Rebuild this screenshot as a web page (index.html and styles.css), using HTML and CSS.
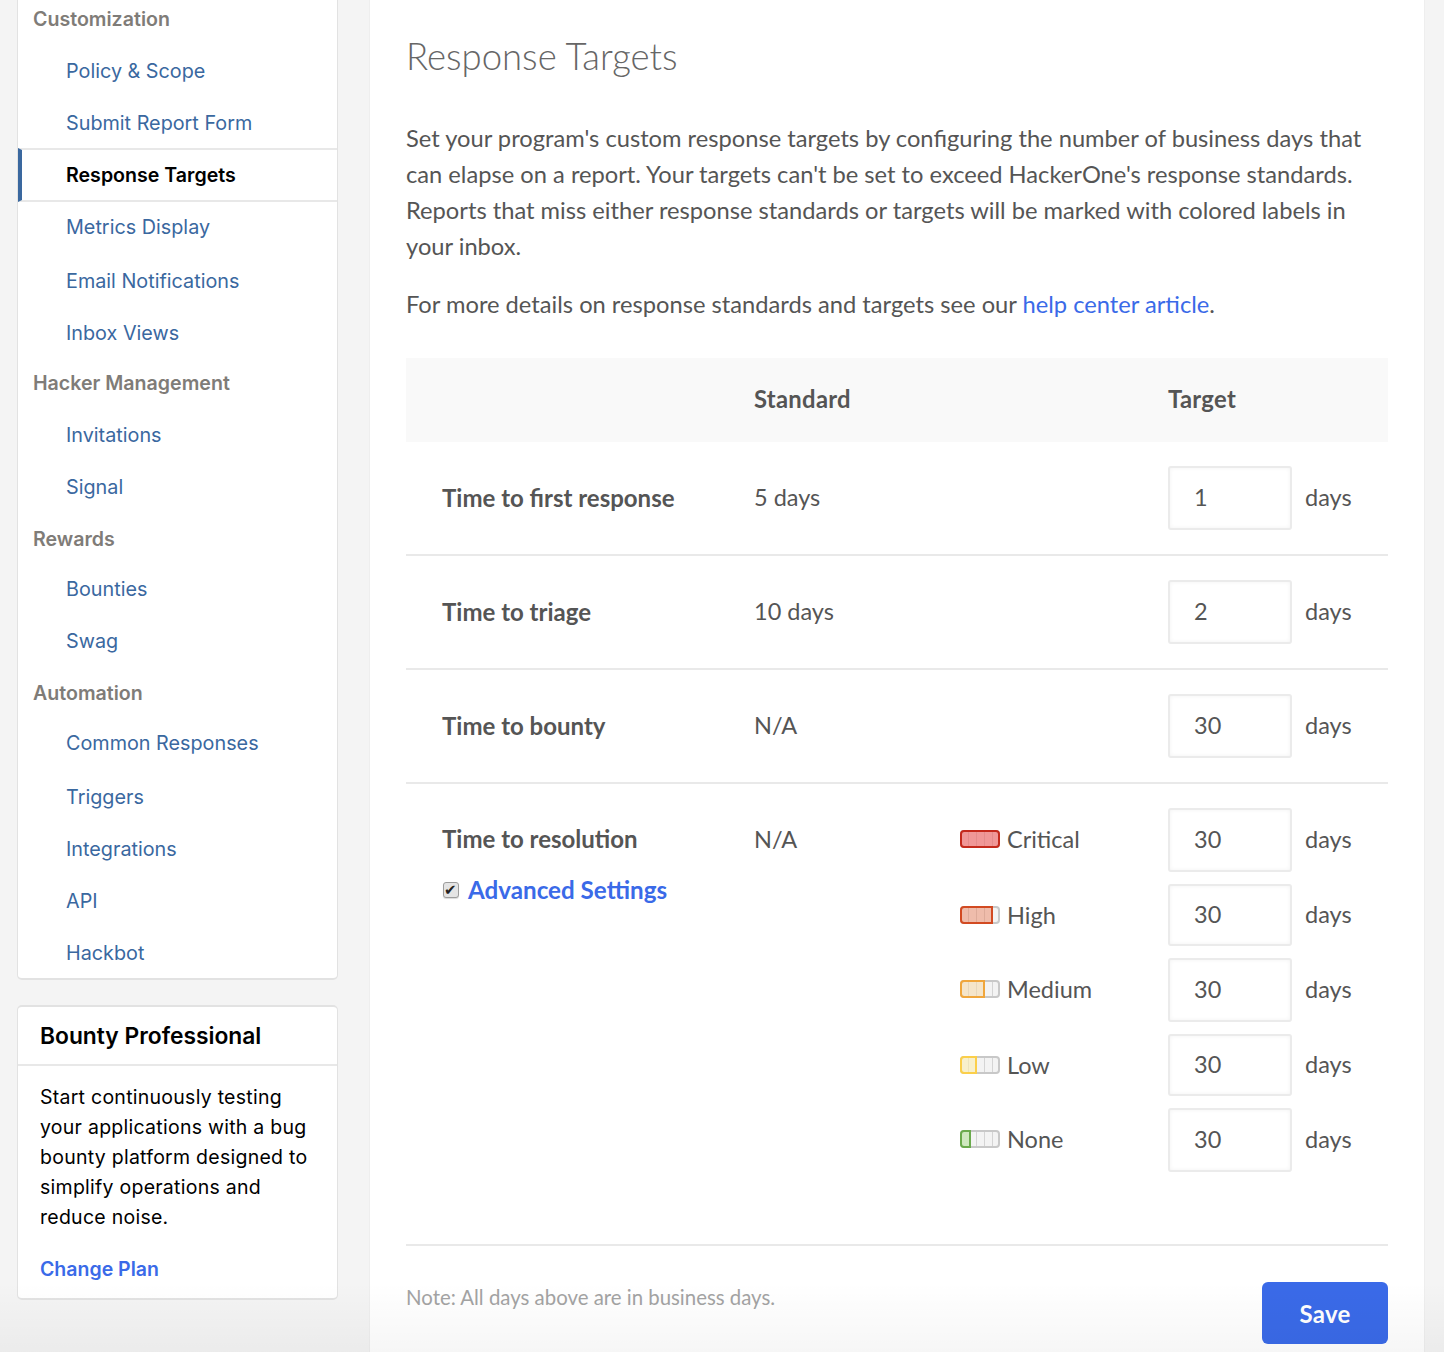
FILE: index.html
```html
<!DOCTYPE html>
<html lang="en">
<head>
  <meta charset="UTF-8" />
  <title>Response Targets</title>
  <link rel="stylesheet" href="styles.css">
</head>
<body>
  <svg class="defs" width="0" height="0">
    <symbol id="track" viewBox="0 0 40 18">
      <rect x="1" y="1" width="38" height="16" rx="3" fill="#f3f3f3" stroke="#c8c8c8" stroke-width="2" />
      <path d="M8.5 2v14M16.5 2v14M24.5 2v14M32.5 2v14" stroke="#d4d4d4" stroke-width="1" />
    </symbol>
  </svg>

  <div class="page">
    <aside class="sidebar">
      <nav class="card nav">
        <div class="nav-head first">Customization</div>
        <a class="nav-link">Policy &amp; Scope</a>
        <a class="nav-link">Submit Report Form</a>
        <a class="nav-link active">Response Targets</a>
        <a class="nav-link">Metrics Display</a>
        <a class="nav-link push">Email Notifications</a>
        <a class="nav-link">Inbox Views</a>
        <div class="nav-head tight">Hacker Management</div>
        <a class="nav-link">Invitations</a>
        <a class="nav-link">Signal</a>
        <div class="nav-head">Rewards</div>
        <a class="nav-link">Bounties</a>
        <a class="nav-link">Swag</a>
        <div class="nav-head">Automation</div>
        <a class="nav-link">Common Responses</a>
        <a class="nav-link push">Triggers</a>
        <a class="nav-link">Integrations</a>
        <a class="nav-link">API</a>
        <a class="nav-link">Hackbot</a>
      </nav>

      <section class="card plan">
        <h3 class="plan-title">Bounty Professional</h3>
        <div class="plan-body">
          <p>Start continuously testing your applications with a bug bounty platform designed to simplify operations and reduce noise.</p>
          <a class="plan-link">Change Plan</a>
        </div>
      </section>
    </aside>

    <main class="main">
      <h1 class="title">Response Targets</h1>
      <p class="intro">Set your program's custom response targets by configuring the number of business days that can elapse on a report. Your targets can't be set to exceed HackerOne's response standards. Reports that miss either response standards or targets will be marked with colored labels in your inbox.</p>
      <p class="intro more">For more details on response standards and targets see our <a class="link">help center article</a>.</p>

      <div class="row table-head">
        <div></div>
        <div>Standard</div>
        <div></div>
        <div>Target</div>
      </div>

      <div class="row">
        <div class="row-label">Time to first response</div>
        <div>5 days</div>
        <div></div>
        <div class="target"><input class="days-input" type="text" value="1"><span>days</span></div>
      </div>
      <div class="row">
        <div class="row-label">Time to triage</div>
        <div>10 days</div>
        <div></div>
        <div class="target"><input class="days-input" type="text" value="2"><span>days</span></div>
      </div>
      <div class="row">
        <div class="row-label">Time to bounty</div>
        <div>N/A</div>
        <div></div>
        <div class="target"><input class="days-input" type="text" value="30"><span>days</span></div>
      </div>

      <div class="row resolution">
        <div>
          <div class="row-label res-label">Time to resolution</div>
          <label class="advanced"><input type="checkbox" checked> Advanced Settings</label>
        </div>
        <div class="res-standard">N/A</div>
        <div class="severities">
          <div class="sev-row">
            <svg class="sev" viewBox="0 0 40 18"><use href="#track" width="40" height="18" /><rect x="1" y="1" width="38" height="16" rx="3" fill="#ef5a5a" fill-opacity=".6" stroke="#c4291c" stroke-width="2" /></svg>
            Critical
          </div>
          <div class="sev-row">
            <svg class="sev" viewBox="0 0 40 18"><use href="#track" width="40" height="18" /><path d="M4 1h28v16H4a3 3 0 0 1-3-3V4a3 3 0 0 1 3-3z" fill="#ea7a55" fill-opacity=".45" stroke="#d24a22" stroke-width="2" /></svg>
            High
          </div>
          <div class="sev-row">
            <svg class="sev" viewBox="0 0 40 18"><use href="#track" width="40" height="18" /><path d="M4 1h20v16H4a3 3 0 0 1-3-3V4a3 3 0 0 1 3-3z" fill="#f5d9a8" fill-opacity=".55" stroke="#f0a63c" stroke-width="2" /></svg>
            Medium
          </div>
          <div class="sev-row">
            <svg class="sev" viewBox="0 0 40 18"><use href="#track" width="40" height="18" /><path d="M4 1h12v16H4a3 3 0 0 1-3-3V4a3 3 0 0 1 3-3z" fill="#fbeeb0" fill-opacity=".6" stroke="#fbcf4a" stroke-width="2" /></svg>
            Low
          </div>
          <div class="sev-row">
            <svg class="sev" viewBox="0 0 40 18"><use href="#track" width="40" height="18" /><path d="M4 1h6v16H4a3 3 0 0 1-3-3V4a3 3 0 0 1 3-3z" fill="#cfe8bf" stroke="#6aaa4c" stroke-width="2" /></svg>
            None
          </div>
        </div>
        <div class="targets">
          <div class="target"><input class="days-input" type="text" value="30"><span>days</span></div>
          <div class="target"><input class="days-input" type="text" value="30"><span>days</span></div>
          <div class="target"><input class="days-input" type="text" value="30"><span>days</span></div>
          <div class="target"><input class="days-input" type="text" value="30"><span>days</span></div>
          <div class="target"><input class="days-input" type="text" value="30"><span>days</span></div>
        </div>
      </div>

      <div class="foot">
        <span class="note">Note: All days above are in business days.</span>
        <button class="save">Save</button>
      </div>
    </main>
  </div>
  <div class="fade"></div>
</body>
</html>
```

FILE: styles.css
```css
html, body { margin: 0; height: 1352px; overflow: hidden; }
body { background: #f4f4f4; font-family: Lato, sans-serif; color: #555; position: relative; }
.defs { position: absolute; }
.page { display: flex; align-items: flex-start; padding-left: 17px; }
.sidebar { width: 321px; flex: none; font-family: Inter, sans-serif; }

.card { background: #fff; border: 1px solid #e2e2e2; border-bottom-width: 2px; border-radius: 5px; box-sizing: border-box; }
.nav { border-top: 0; border-radius: 0 0 5px 5px; height: 980px; }
.nav-head { height: 50px; line-height: 52px; padding-left: 15px; font-size: 19.6px; font-weight: 600; color: #7f7c78; }
.nav-head.first { height: 45px; line-height: 38px; }
.nav-head.tight { line-height: 48px; }
.nav-link { display: block; height: 52px; line-height: 52px; padding-left: 48px; font-size: 19.8px; color: #3a689f; }
.nav-link.push { margin-top: 2px; }
.nav-link.active { height: 54px; margin: -1px 0; line-height: 50px; box-sizing: border-box; padding-left: 44px; color: #000; font-weight: 600; font-size: 19.6px; border-top: 2px solid #e8e8e8; border-bottom: 2px solid #e8e8e8; border-left: 4px solid #3a689f; }

.plan { margin-top: 25px; height: 295px; border-top-width: 2px; }
.plan-title { margin: 0; height: 57px; line-height: 57px; padding-left: 22px; font-size: 22.8px; font-weight: 600; color: #000; border-bottom: 2px solid #e8e8e8; }
.plan-body { padding: 16px 22px 0; color: #000; font-size: 19.5px; line-height: 30px; letter-spacing: .26px; }
.plan-body p { margin: 0; }
.plan-link { display: block; margin-top: 22px; color: #3a6ae8; font-weight: 600; letter-spacing: 0; }

.main { width: 1054px; margin-left: 32px; height: 1352px; box-sizing: border-box; padding: 0 36px; background: #fff; box-shadow: 0 0 0 1px #eee; }
.title { margin: 0; padding-top: 33px; height: 84px; box-sizing: border-box; font-size: 36.5px; line-height: 46px; font-weight: 300; color: #666; }
.intro { margin: 0; padding-top: 36px; max-width: 972px; font-size: 23.7px; line-height: 36px; }
.intro.more { padding-top: 22px; }
.link { color: #3a6ae8; }

.row { display: grid; grid-template-columns: 312px 205px 208px 1fr; padding-left: 36px; height: 114px; align-items: center; border-bottom: 2px solid #e9e9e9; box-sizing: border-box; font-size: 23.5px; }
.row > div:not(.target), .target span { padding-bottom: 2px; }
.table-head { margin-top: 36px; height: 84px; background: #f9f9f9; border-bottom: 0; font-size: 23.8px; font-weight: 700; letter-spacing: .3px; }
.table-head > div:last-child { margin-left: 1px; }
.row-label { font-size: 24px; font-weight: 700; }
.target { display: flex; align-items: center; gap: 13px; margin-left: 1px; }
.days-input { width: 124px; height: 64px; box-sizing: border-box; padding: 0 0 2px 24px; border: 2px solid #ebebeb; border-radius: 3px; font: inherit; color: #555; outline: 0; box-shadow: inset 0 0 4px rgba(0, 0, 0, .05); }

.resolution { height: 462px; align-items: start; padding-top: 24px; }
.res-label { line-height: 62px; }
.res-standard { line-height: 62px; }
.advanced { display: flex; align-items: center; gap: 9px; margin-top: 5px; color: #3a6ae8; font-size: 24.2px; font-weight: 700; }
.advanced input { appearance: none; position: relative; margin: 0 0 0 1px; width: 16px; height: 16px; border: 1px solid #9c9c9c; border-radius: 3px; background: #e4e4e4; box-shadow: 0 1px 1px rgba(0, 0, 0, .15); }
.advanced input::after { content: "\2714"; position: absolute; left: 0; top: -1px; font: 15px/16px "DejaVu Sans", sans-serif; color: #222; }
.severities, .targets { display: flex; flex-direction: column; gap: 12px; }
.severities { margin-top: -1px; margin-left: 1px; padding-bottom: 0; }
.sev-row { display: flex; align-items: center; gap: 7px; height: 64px; }
.sev-row:nth-child(even) { height: 62px; padding-top: 2px; box-sizing: border-box; }
.targets .target:nth-child(even) .days-input { height: 62px; }
.sev { width: 40px; height: 18px; flex: none; }

.foot { display: flex; justify-content: space-between; align-items: flex-start; padding-top: 36px; }
.note { font-size: 20.4px; color: #a3a3a3; line-height: 30px; }
.save { width: 126px; height: 62px; border: 0; border-radius: 6px; background: #3a6ae8; color: #fff; font: 700 24px Lato, sans-serif; letter-spacing: .3px; }

.fade { position: absolute; left: 0; right: 0; bottom: 0; height: 70px; background: linear-gradient(rgba(0, 0, 0, 0), rgba(0, 0, 0, .035)); pointer-events: none; }
```
